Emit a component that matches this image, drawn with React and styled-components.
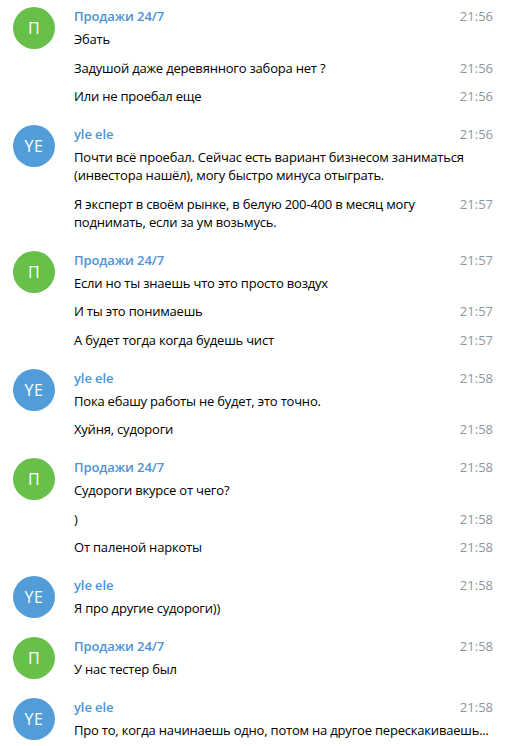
import React from "react";
import styled, { createGlobalStyle } from "styled-components";

const Global = createGlobalStyle`
  body {
    margin: 0;
    background: #fff;
    font-family: "Open Sans", "Liberation Sans", sans-serif;
  }
`;

const Feed = styled.div`
  display: flex;
  flex-direction: column;
  width: 507px;
`;

const Group = styled.div`
  display: flex;
  align-items: flex-start;
  padding: 7px 14px 7.5px 13px;
`;

const Avatar = styled.div`
  flex: 0 0 42px;
  width: 42px;
  height: 42px;
  border-radius: 50%;
  background: ${(p) => p.$color};
  color: #fff;
  font-size: 16px;
  display: flex;
  align-items: center;
  justify-content: center;
  letter-spacing: 0.5px;
`;

const Body = styled.div`
  flex: 1;
  margin-left: 19px;
  min-width: 0;
`;

const Head = styled.div`
  display: flex;
  justify-content: space-between;
  line-height: 18px;
`;

const Name = styled.span`
  font-size: 13px;
  font-weight: 600;
  color: #4b93d6;
  letter-spacing: -0.1px;
`;

const Time = styled.span`
  font-size: 13px;
  color: #8f969c;
  flex: 0 0 auto;
  margin-left: ${(p) => (p.$inline ? "13px" : "0")};
`;

const Row = styled.div`
  display: flex;
  align-items: flex-start;
  padding: 5px 0 5.5px;
  line-height: 18px;
`;

const Text = styled.div`
  flex: 1;
  font-size: 13px;
  color: #000;
  letter-spacing: -0.2px;
`;

const C_GREEN = "#68c04a";
const C_BLUE = "#529dd8";

const groups = [
  {
    name: "Продажи 24/7", init: "П", color: C_GREEN, time: "21:56",
    msgs: [["Эбать"], ["Задушой даже деревянного забора нет ?", "21:56"], ["Или не проебал еще", "21:56"]],
  },
  {
    name: "yle ele", init: "YE", color: C_BLUE, time: "21:56",
    msgs: [
      ["Почти всё проебал. Сейчас есть вариант бизнесом заниматься (инвестора нашёл), могу быстро минуса отыграть."],
      ["Я эксперт в своём рынке, в белую 200-400 в месяц могу поднимать, если за ум возьмусь.", "21:57"],
    ],
  },
  {
    name: "Продажи 24/7", init: "П", color: C_GREEN, time: "21:57",
    msgs: [["Если но ты знаешь что это просто воздух"], ["И ты это понимаешь", "21:57"], ["А будет тогда когда будешь чист", "21:57"]],
  },
  {
    name: "yle ele", init: "YE", color: C_BLUE, time: "21:58",
    msgs: [["Пока ебашу работы не будет, это точно."], ["Хуйня, судороги", "21:58"]],
  },
  {
    name: "Продажи 24/7", init: "П", color: C_GREEN, time: "21:58",
    msgs: [["Судороги вкурсе от чего?"], [")", "21:58"], ["От паленой наркоты", "21:58"]],
  },
  { name: "yle ele", init: "YE", color: C_BLUE, time: "21:58", msgs: [["Я про другие судороги))"]] },
  { name: "Продажи 24/7", init: "П", color: C_GREEN, time: "21:58", msgs: [["У нас тестер был"]] },
  {
    name: "yle ele", init: "YE", color: C_BLUE, time: "21:58",
    msgs: [["Про то, когда начинаешь одно, потом на другое перескакиваешь..."]],
  },
];

export default function App() {
  return (
    <>
      <Global />
      <Feed>
        {groups.map((g, i) => (
          <Group key={i}>
            <Avatar $color={g.color}>{g.init}</Avatar>
            <Body>
              <Head>
                <Name>{g.name}</Name>
                <Time>{g.time}</Time>
              </Head>
              {g.msgs.map(([text, time], j) => (
                <Row key={j}>
                  <Text>{text}</Text>
                  {time && <Time $inline>{time}</Time>}
                </Row>
              ))}
            </Body>
          </Group>
        ))}
      </Feed>
    </>
  );
}
